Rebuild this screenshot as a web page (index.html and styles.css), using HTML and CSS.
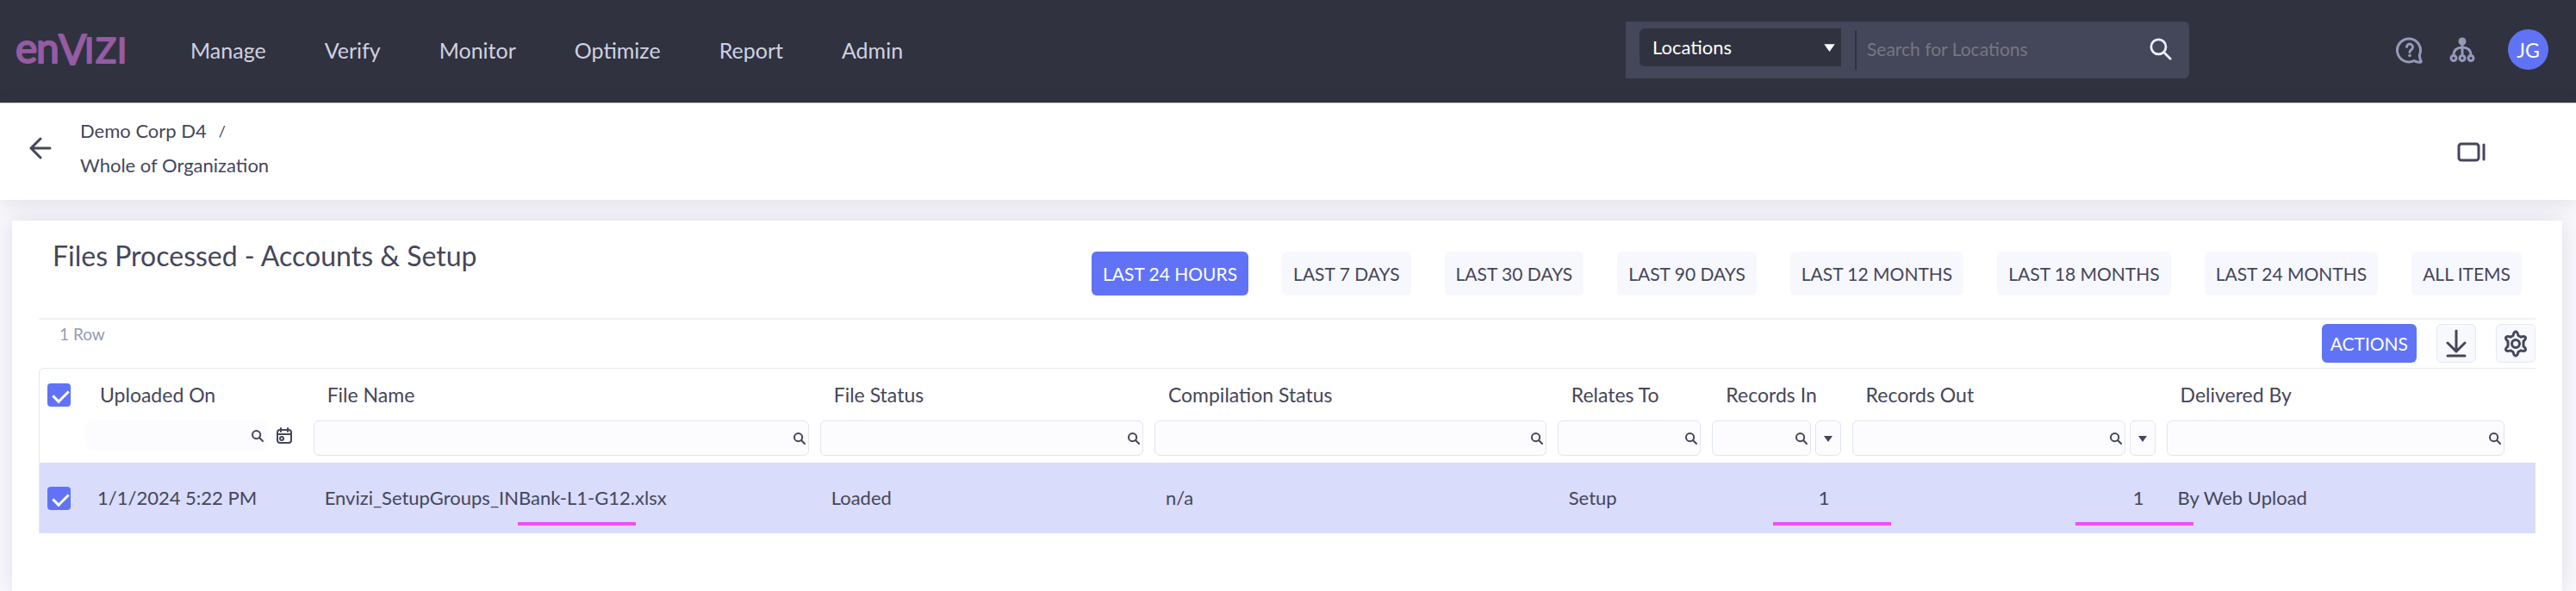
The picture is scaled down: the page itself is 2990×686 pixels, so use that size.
FILE: index.html
```html
<!DOCTYPE html>
<html lang="en">
<head>
<meta charset="utf-8">
<title>Files Processed - Accounts &amp; Setup</title>
<link rel="stylesheet" href="styles.css">
</head>
<body>
<svg class="defs" aria-hidden="true">
  <symbol id="search" viewBox="0 0 14 14"><circle cx="5.6" cy="5.6" r="4.6"/><path d="M9 9l4 4"/></symbol>
  <symbol id="caret" viewBox="0 0 10 8"><path d="M0 1h10L5 8z"/></symbol>
</svg>
<header class="topbar">
  <a class="logo" href="#" aria-label="enVIZI">
    <svg width="132" height="76" viewBox="0 0 132 76"><text y="53"><tspan class="logo-en" x="0">e</tspan><tspan class="logo-en" x="24">n</tspan><tspan class="logo-v" x="50" y="55">V</tspan><tspan class="logo-izi" x="80" y="53">I</tspan><tspan class="logo-izi" x="93">Z</tspan><tspan class="logo-izi" x="118">I</tspan></text></svg>
  </a>
  <nav class="nav">
    <a href="#">Manage</a><a href="#">Verify</a><a href="#">Monitor</a><a href="#">Optimize</a><a href="#">Report</a><a href="#">Admin</a>
  </nav>
  <form class="search">
    <div class="scope">
      <select aria-label="Search scope"><option>Locations</option></select>
      <svg class="caret" width="15" height="10"><use href="#caret"/></svg>
    </div>
    <input class="search-input" type="text" placeholder="Search for Locations" aria-label="Search for Locations">
    <button class="search-go" type="button" aria-label="Search"><svg width="26" height="26"><use href="#search"/></svg></button>
  </form>
  <div class="tools">
    <button class="tool" type="button" aria-label="Help">
      <svg width="32" height="32" viewBox="0 0 32 32"><path d="M27.500 21.500A13.500 13.500 0 1 0 21 28.500c2.500 1.500 5 2 8 1.500 1-1.500-1-2-1-4 0-1.500-1-2.500-.5-4.500z"/><path d="M12.500 12.500a3.500 3.500 0 1 1 5.500 3c-1.500 1-2 1.500-2 3"/><circle class="dot" cx="16" cy="22.500" r="1.800"/></svg>
    </button>
    <button class="tool" type="button" aria-label="Hierarchy">
      <svg width="30" height="30" viewBox="0 0 30 30"><circle class="dot" cx="15" cy="5" r="4.500"/><path d="M15 8v13M5 21c0-6 4-9 10-9s10 3 10 9"/><circle cx="5" cy="24.500" r="3"/><circle cx="15" cy="24.500" r="3"/><circle cx="25" cy="24.500" r="3"/></svg>
    </button>
    <button class="avatar" type="button">JG</button>
  </div>
</header>
<section class="crumbs">
  <button class="icon-btn" type="button" aria-label="Back"><svg width="26" height="26" viewBox="0 0 26 26"><path d="M13 2L2 13l11 11M2 13h22"/></svg></button>
  <div class="trail">
    <div class="trail-parent"><a href="#">Demo Corp D4</a><span class="slash">/</span></div>
    <div>Whole of Organization</div>
  </div>
  <button class="icon-btn panel" type="button" aria-label="Toggle panel"><svg width="34" height="24" viewBox="0 0 34 24"><rect x="2" y="2" width="23" height="19" rx="3"/><path d="M31 3v17"/></svg></button>
</section>
<main class="card">
  <div class="card-head">
    <h1>Files Processed - Accounts &amp; Setup</h1>
    <div class="ranges">
      <button type="button" class="range on">LAST 24 HOURS</button>
      <button type="button" class="range">LAST 7 DAYS</button>
      <button type="button" class="range">LAST 30 DAYS</button>
      <button type="button" class="range">LAST 90 DAYS</button>
      <button type="button" class="range">LAST 12 MONTHS</button>
      <button type="button" class="range">LAST 18 MONTHS</button>
      <button type="button" class="range">LAST 24 MONTHS</button>
      <button type="button" class="range">ALL ITEMS</button>
    </div>
  </div>
  <div class="toolbar">
    <span class="count">1 Row</span>
    <div class="actions">
      <button type="button" class="action-main">ACTIONS</button>
      <button type="button" class="square" aria-label="Download"><svg width="24" height="34" viewBox="0 0 24 34"><path d="M12 2v24M2 16l10 10 10-10M2 31h20"/></svg></button>
      <button type="button" class="square" aria-label="Settings"><svg width="32" height="32" viewBox="0 0 32 32"><path d="M13 6.500C13.500 4 14 2 16 2s2.500 2 3 4.500l3 1.700c2.500-.9 4.300-1.400 5.300.3s-.4 3-2.300 4.700v5.600c1.900 1.700 3.300 3 2.300 4.700s-2.800 1.200-5.300.3l-3 1.700c-.5 2.500-1 4.500-3 4.500s-2.500-2-3-4.500l-3-1.700c-2.500.9-4.300 1.400-5.300-.3s.4-3 2.300-4.700v-5.600c-1.900-1.700-3.300-3-2.300-4.700s2.800-1.200 5.300-.3z"/><circle cx="16" cy="16" r="4.500"/></svg></button>
    </div>
  </div>
  <table class="grid">
    <colgroup><col class="c-check"><col class="c-date"><col class="c-name"><col class="c-status"><col class="c-comp"><col class="c-rel"><col class="c-in"><col class="c-out"><col></colgroup>
    <thead>
      <tr class="labels">
        <th><input class="tick" type="checkbox" checked aria-label="Select all rows"></th>
        <th>Uploaded On</th><th>File Name</th><th>File Status</th><th>Compilation Status</th><th>Relates To</th><th>Records In</th><th>Records Out</th><th>Delivered By</th>
      </tr>
      <tr class="filters">
        <td></td>
        <td><div class="filter date"><div class="field plain"><input type="text" aria-label="Filter Uploaded On"><svg class="mag" width="14" height="14"><use href="#search"/></svg></div><button class="cal" type="button" aria-label="Pick date"><svg width="20" height="20" viewBox="0 0 20 20"><rect x="2" y="3" width="16" height="15" rx="3"/><path d="M2 8h16M6 1v4M14 1v4"/><circle cx="7" cy="13" r="2"/></svg></button></div></td>
        <td><div class="filter"><div class="field"><input type="text" aria-label="Filter File Name"><svg class="mag" width="14" height="14"><use href="#search"/></svg></div></div></td>
        <td><div class="filter"><div class="field"><input type="text" aria-label="Filter File Status"><svg class="mag" width="14" height="14"><use href="#search"/></svg></div></div></td>
        <td><div class="filter"><div class="field"><input type="text" aria-label="Filter Compilation Status"><svg class="mag" width="14" height="14"><use href="#search"/></svg></div></div></td>
        <td><div class="filter"><div class="field"><input type="text" aria-label="Filter Relates To"><svg class="mag" width="14" height="14"><use href="#search"/></svg></div></div></td>
        <td><div class="filter"><div class="field"><input type="text" aria-label="Filter Records In"><svg class="mag" width="14" height="14"><use href="#search"/></svg></div><button class="op" type="button" aria-label="Records In operator"><svg class="caret" width="10" height="8"><use href="#caret"/></svg></button></div></td>
        <td><div class="filter"><div class="field"><input type="text" aria-label="Filter Records Out"><svg class="mag" width="14" height="14"><use href="#search"/></svg></div><button class="op" type="button" aria-label="Records Out operator"><svg class="caret" width="10" height="8"><use href="#caret"/></svg></button></div></td>
        <td><div class="filter last"><div class="field"><input type="text" aria-label="Filter Delivered By"><svg class="mag" width="14" height="14"><use href="#search"/></svg></div></div></td>
      </tr>
    </thead>
    <tbody>
      <tr class="row">
        <td><input class="tick" type="checkbox" checked aria-label="Select row"></td>
        <td>1/1/2024 5:22 PM</td>
        <td class="marked mark-name">Envizi_SetupGroups_INBank-L1-G12.xlsx</td>
        <td>Loaded</td><td>n/a</td><td>Setup</td>
        <td class="num marked mark-in">1</td>
        <td class="num marked mark-out">1</td>
        <td>By Web Upload</td>
      </tr>
    </tbody>
  </table>
</main>
</body>
</html>
```
FILE: styles.css
```css
* { box-sizing: border-box; }
body {
  margin: 0;
  min-height: 100vh;
  display: flex;
  flex-direction: column;
  background: #f8f8fd;
  color: #45465a;
  font-family: Lato, "Open Sans", sans-serif;
  font-size: 23px;
  line-height: 28px;
}
.defs { position: absolute; width: 0; height: 0; }
a { color: inherit; text-decoration: none; }
button, input, select { font: inherit; color: inherit; }
button { border: 0; padding: 0; background: none; display: flex; align-items: center; justify-content: center; }
svg { display: block; fill: none; stroke: currentColor; stroke-width: 3; stroke-linecap: round; stroke-linejoin: round; }

.topbar {
  display: flex;
  align-items: center;
  height: 120px;
  padding: 0 32px 4px 18px;
  background: #30323f;
  border-bottom: 1px solid #c8c8ce;
}
.logo { color: #965ba3; }
.logo svg { fill: currentColor; stroke-width: 2; }
.logo-en { font-size: 48px; }
.logo-v { font-size: 48px; }
.logo-izi { font-size: 40px; }
.nav { display: flex; gap: 68px; margin-left: 71px; color: #cfd1e2; font-size: 25px; }
.search {
  display: flex;
  align-items: center;
  width: 654px;
  height: 66px;
  margin-left: auto;
  padding: 0 20px 0 16px;
  background: #44465a;
  border-radius: 0 6px 6px 0;
}
.scope {
  display: flex;
  align-items: center;
  width: 234px;
  height: 44px;
  padding-right: 6px;
  margin-bottom: 6px;
  background: #30323f;
  border-radius: 6px 0 0 6px;
  color: #fff;
}
.scope select { flex: 1; appearance: none; border: 0; padding: 0 0 0 15px; height: 44px; background: none; font-size: 22px; }
.caret { fill: currentColor; stroke: none; }
.search-input {
  flex: 1;
  min-width: 0;
  height: 46px;
  margin-left: 16px;
  padding: 0 0 2px 12px;
  border: 0;
  border-left: 2px solid #30323f;
  background: none;
  font-size: 21px;
  color: #fff;
}
.search-input::placeholder { color: #77777d; opacity: 1; }
.search-go { color: #eef; padding-bottom: 2px; }
.search-go svg { stroke-width: 1.5; }
.tools { display: flex; align-items: center; gap: 30px; margin-left: 240px; color: #949ab8; }
.avatar { width: 47px; height: 47px; margin-left: 8px; border-radius: 50%; background: #6073f6; color: #fff; font-size: 23px; }
.dot { fill: currentColor; stroke: none; }

.crumbs {
  display: flex;
  align-items: center;
  height: 112px;
  padding: 0 104px 8px 34px;
  background: #fff;
  box-shadow: 0 4px 20px rgba(60, 60, 80, .12);
}
.trail { margin: 0 auto 0 33px; padding-bottom: 1px; font-size: 22px; line-height: 40px; }
.trail-parent { display: flex; gap: 14px; }
.slash { font-size: 18px; }
.panel { padding-top: 10px; }

.card {
  flex: 1;
  margin: 24px 16px 0 14px;
  padding: 0 31px;
  background: #fff;
  box-shadow: 0 0 24px rgba(60, 60, 80, .14);
}
.card-head { display: flex; justify-content: space-between; height: 115px; padding: 21px 16px; border-bottom: 2px solid #f3f3f6; }
h1 { margin: 0; font-size: 32px; font-weight: 400; line-height: 40px; }
.ranges { display: flex; gap: 39px; padding-top: 15px; }
.range { height: 51px; padding: 0 13px; border-radius: 6px; background: #f7f8fe; font-size: 21px; white-space: nowrap; }
.range.on { background: #6073f6; color: #fff; }
.toolbar { display: flex; justify-content: space-between; height: 56px; padding-top: 5px; }
.count { padding: 0 24px; font-size: 19px; line-height: 24px; color: #959bb6; }
.actions { display: flex; gap: 23px; }
.action-main { height: 45px; padding: 0 10px; border-radius: 6px; background: #6073f6; color: #fff; font-size: 21px; }
.square { width: 46px; height: 45px; border: 1px solid #e7e9f3; border-radius: 6px; background: #f8f9fe; }

.grid { width: 100%; table-layout: fixed; border-collapse: separate; border-spacing: 0; border-top: 1px solid #e8e8ee; border-left: 1px solid #e8e8ee; border-radius: 6px 0 0 0; }
.c-check { width: 48px; }
.c-date { width: 9.1%; }
.c-name { width: 20.3%; }
.c-status { width: 13.4%; }
.c-comp { width: 16.15%; }
.c-rel { width: 6.2%; }
.c-in { width: 5.6%; }
.c-out { width: 12.6%; }
.grid th, .grid td { padding: 0; text-align: left; font-weight: 400; }
.labels th { height: 60px; padding: 0 0 0 22px; white-space: nowrap; }
.labels th:first-child, .row td:first-child { padding-left: 9px; }
.filters td { height: 49px; vertical-align: top; }
.filter { display: flex; gap: 5px; padding: 0 7px 0 6px; }
.filter.last { padding-right: 36px; }
.filter.date { gap: 10px; align-items: center; padding-right: 18px; }
.field { display: flex; align-items: center; flex: 1; height: 41px; padding-right: 3px; border: 1px solid #e2e6f1; border-radius: 6px; background: #fcfcff; }
.field.plain { height: 35px; border-color: transparent; }
.field input { flex: 1; width: 0; min-width: 0; border: 0; background: none; }
.mag, .caret { flex: none; }
.mag { stroke-width: 2; }
.cal svg { stroke-width: 2; }
.op { width: 30px; height: 41px; border: 1px solid #e2e6f1; border-radius: 6px; background: #fcfcff; }
.row td { height: 82px; padding: 0 20px 0 19px; background: #d9dcfb; white-space: nowrap; font-size: 22px; }
.row .num { text-align: right; }
.marked { position: relative; }
.marked::after { content: ""; position: absolute; width: 137px; height: 4px; bottom: 9px; background: #ee50fa; z-index: 1; }
.mark-name::after { left: 243px; }
.mark-in::after { right: -51px; }
.mark-out::after { right: -37px; }
.tick { appearance: none; display: block; width: 27px; height: 27px; margin: 0; border-radius: 4px; background: #6073f6; position: relative; }
.tick:checked::after { content: ""; position: absolute; left: 10px; top: 4px; width: 8px; height: 15px; border: solid #fff; border-width: 0 3px 3px 0; transform: rotate(45deg); }
```
